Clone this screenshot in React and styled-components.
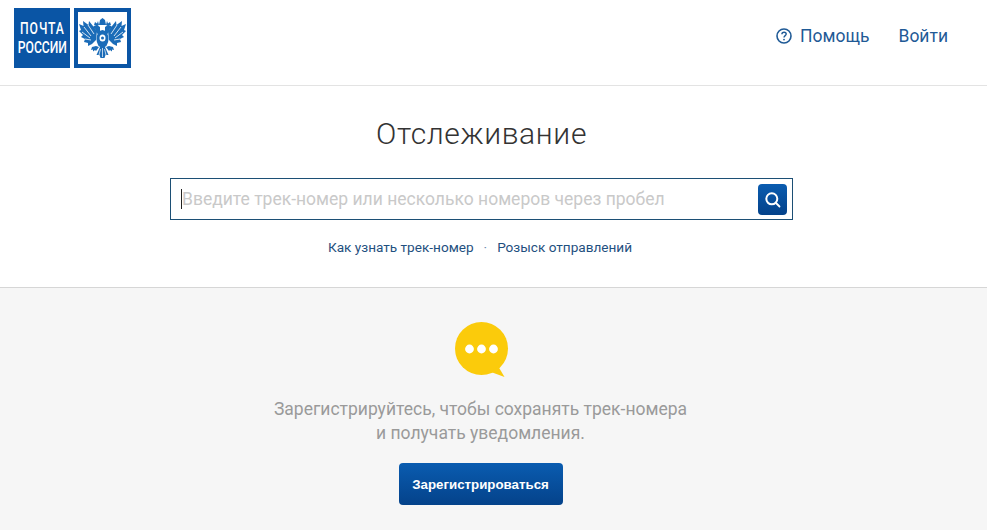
import React from "react";
import styled, { createGlobalStyle } from "styled-components";

const GlobalStyle = createGlobalStyle`
  html, body {
    margin: 0;
    padding: 0;
    background: #f6f6f6;
    font-family: Roboto, "Liberation Sans", sans-serif;
  }
`;

const Page = styled.div`
  min-height: 530px;
  display: flex;
  flex-direction: column;
`;

const Header = styled.header`
  height: 86px;
  box-sizing: border-box;
  background: #fff;
  border-bottom: 1px solid #e3e3e3;
  padding: 8px 39px 0 14px;
  display: flex;
  justify-content: space-between;
  align-items: flex-start;
`;

const Logo = styled.div`
  display: flex;
  gap: 4px;
`;

const LogoText = styled.div`
  width: 56px;
  height: 60px;
  background: #0a55a5;
  display: flex;
  flex-direction: column;
  align-items: center;
  justify-content: center;
`;

const LogoLine = styled.span`
  display: block;
  color: #fff;
  font-size: 16px;
  line-height: 19px;
  font-weight: 500;
  white-space: nowrap;
  letter-spacing: ${(p) => p.$spacing || 0}px;
  transform: scaleX(0.76);
`;

const LogoEmblem = styled.div`
  width: 57px;
  height: 60px;
  box-sizing: border-box;
  border: 4px solid #0a55a5;
  background: #fff;
  display: flex;
  align-items: center;
  justify-content: center;
`;

const Nav = styled.nav`
  height: 55px;
  display: flex;
  align-items: center;
  gap: 29px;
`;

const NavLink = styled.a`
  display: flex;
  align-items: center;
  gap: 8px;
  color: #1f5a96;
  font-size: 17.5px;
  text-decoration: none;
`;

const Tracking = styled.section`
  height: 202px;
  box-sizing: border-box;
  background: #fff;
  border-bottom: 1px solid #d6d6d6;
  padding: 28px 24px 0 0;
  display: flex;
  flex-direction: column;
  align-items: center;
`;

const Title = styled.h1`
  margin: 0;
  font-size: 30px;
  line-height: 40px;
  font-weight: 300;
  color: #333;
  letter-spacing: 0.65px;
`;

const SearchBox = styled.div`
  width: 623px;
  height: 42px;
  margin-top: 24px;
  box-sizing: border-box;
  border: 1px solid #1c4f75;
  background: #fff;
  display: flex;
  align-items: center;
  padding: 0 5px 0 10px;
`;

const Caret = styled.i`
  width: 1px;
  height: 20px;
  background: #222;
  flex: none;
`;

const Placeholder = styled.div`
  flex: 1;
  color: #c9c9c9;
  font-size: 17.5px;
  white-space: nowrap;
`;

const SearchButton = styled.button`
  width: 29px;
  height: 31px;
  padding: 0;
  border: none;
  border-radius: 4px;
  background: linear-gradient(#0a5cb0, #04428a);
  display: flex;
  align-items: center;
  justify-content: center;
`;

const Links = styled.div`
  display: flex;
  align-items: center;
  gap: 10px;
  margin: 18px 3px 0 0;
  height: 18px;
  font-size: 13.6px;
  color: #1f5080;
`;

const Dot = styled.span`
  color: #6f8faf;
`;

const Promo = styled.section`
  flex: 1;
  background: #f6f6f6;
  padding: 34px 26px 0 0;
  display: flex;
  flex-direction: column;
  align-items: center;
`;

const BubbleIcon = styled.svg`
  display: block;
  margin-left: 2px;
`;

const PromoText = styled.p`
  margin: 19px 0 0;
  text-align: center;
  color: #9a9a9a;
  font-size: 17.5px;
  line-height: 24px;
`;

const RegisterButton = styled.button`
  width: 164px;
  height: 42px;
  margin-top: 18px;
  border: none;
  border-radius: 4px;
  background: linear-gradient(#0a5cb0, #04428a);
  color: #fff;
  font-family: "Liberation Sans", Arial, sans-serif;
  font-size: 13.3px;
  font-weight: 700;
`;

const EagleHalf = ({ flip }) => (
  <g transform={flip ? "matrix(-1 0 0 1 47 0)" : undefined}>
    <path d="M18 13L10 3 9.500 7 4 3l.5 5L0 6l2 6-2 1 4 4-2 2 4 2-1 3 4 1v3l4-2 4-4z" />
    <path d="M9 7l6 9M5 9l7 9M3 14l8 6M6 21l6 1" fill="none" stroke="#fff" strokeWidth=".8" />
    <path d="M21 9l-3-2-3 1-2 2 3 .5 1 3 2 3h2z" />
    <path d="M15 7l1-3 2 1.500L19 3l1 4-2 1z" />
    <path d="M17 28l-4 1-1 3 2-.5 0 2 2-1.500 1 1 3-4z" />
  </g>
);

const Eagle = () => (
  <svg width="47" height="42" viewBox="0 0 47 40" fill="#1b6cb8">
    <EagleHalf />
    <EagleHalf flip />
    <path d="M21 2l2.500-2L26 2l1 5h-7z" />
    <ellipse cx="23.500" cy="21" rx="6" ry="9" />
    <ellipse cx="23.500" cy="20" rx="3" ry="3.600" fill="#fff" />
    <circle cx="23.500" cy="20" r="1.500" />
    <path d="M21 29h5l3.500 8-3 0-1 3h-4l-1-3-3 0z" />
    <path d="M23.500 30v9M21.500 31l-1.500 6M25.500 31l1.500 6" fill="none" stroke="#fff" strokeWidth=".7" />
  </svg>
);

const HelpIcon = () => (
  <svg width="16" height="16" viewBox="0 0 16 16" fill="none" stroke="#1f5a96">
    <circle cx="8" cy="8" r="7" strokeWidth="1.600" />
    <path d="M5.900 6.300c0-1.300 1-2 2.200-2s2.100.8 2.100 1.800c0 1.500-2.200 1.500-2.200 3.300" strokeWidth="1.400" />
    <circle cx="8" cy="11.600" r=".9" fill="#1f5a96" stroke="none" />
  </svg>
);

const SearchIcon = () => (
  <svg width="17" height="17" viewBox="0 0 17 17" fill="none" stroke="#fff">
    <circle cx="7.800" cy="7.800" r="5.500" strokeWidth="2" />
    <path d="M12 12l3.500 3.500" strokeWidth="1.800" strokeLinecap="round" />
  </svg>
);

const Bubble = () => (
  <BubbleIcon width="54" height="56" viewBox="0 0 54 56">
    <circle cx="26.500" cy="26.500" r="26.500" fill="#fbcb0b" />
    <path d="M43 44l6.500 11L36 50z" fill="#fbcb0b" />
    <circle cx="14.500" cy="27" r="4.400" fill="#fff" />
    <circle cx="26.500" cy="27" r="4.400" fill="#fff" />
    <circle cx="38.500" cy="27" r="4.400" fill="#fff" />
  </BubbleIcon>
);

export default function App() {
  return (
    <Page>
      <GlobalStyle />
      <Header>
        <Logo>
          <LogoText>
            <LogoLine $spacing={1.2}>ПОЧТА</LogoLine>
            <LogoLine>РОССИИ</LogoLine>
          </LogoText>
          <LogoEmblem>
            <Eagle />
          </LogoEmblem>
        </Logo>
        <Nav>
          <NavLink>
            <HelpIcon />
            Помощь
          </NavLink>
          <NavLink>Войти</NavLink>
        </Nav>
      </Header>
      <Tracking>
        <Title>Отслеживание</Title>
        <SearchBox>
          <Caret />
          <Placeholder>Введите трек-номер или несколько номеров через пробел</Placeholder>
          <SearchButton>
            <SearchIcon />
          </SearchButton>
        </SearchBox>
        <Links>
          <span>Как узнать трек-номер</span>
          <Dot>·</Dot>
          <span>Розыск отправлений</span>
        </Links>
      </Tracking>
      <Promo>
        <Bubble />
        <PromoText>
          Зарегистрируйтесь, чтобы сохранять трек-номера
          <br />
          и получать уведомления.
        </PromoText>
        <RegisterButton>Зарегистрироваться</RegisterButton>
      </Promo>
    </Page>
  );
}
